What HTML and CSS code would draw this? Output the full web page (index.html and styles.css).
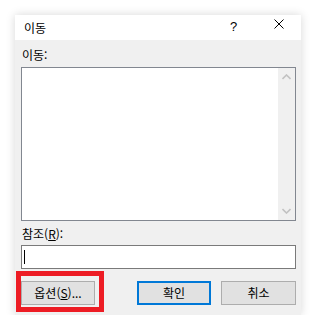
FILE: index.html
```html
<!DOCTYPE html>
<html lang="ko">
<head>
<meta charset="utf-8">
<link rel="stylesheet" href="styles.css">
</head>
<body>
<div class="dialog">
  <div class="titlebar">
    <span class="title">이동</span>
    <span class="help">?</span>
    <span class="close"><svg width="10" height="10" viewBox="0 0 10 10"><path d="M0.5 0.5L9.5 9.5M9.5 0.5L0.5 9.5" stroke="#000" stroke-width="1" fill="none"/></svg></span>
  </div>
  <div class="body">
    <div class="label">이동:</div>
    <div class="list">
      <div class="list-area"></div>
      <div class="scrollbar">
        <svg width="9" height="6" viewBox="0 0 9 6"><path d="M0.5 5L4.5 1L8.5 5" stroke="#c2c2c2" stroke-width="1.6" fill="none"/></svg>
        <svg width="9" height="6" viewBox="0 0 9 6"><path d="M0.5 1L4.5 5L8.5 1" stroke="#c2c2c2" stroke-width="1.6" fill="none"/></svg>
      </div>
    </div>
    <div class="label label2">참조(<u>R</u>):</div>
    <div class="input"><span class="caret"></span></div>
    <div class="buttons">
      <div class="btn options">옵션(<u>S</u>)...</div>
      <div class="spacer"></div>
      <div class="btn ok">확인</div>
      <div class="btn cancel">취소</div>
    </div>
  </div>
  <div class="highlight"></div>
</div>
</body>
</html>
```
FILE: styles.css
```css
html, body {
  margin: 0;
  padding: 0;
  background: #ffffff;
}
body {
  font-family: "Noto Sans CJK KR", "Noto Sans", sans-serif;
  font-size: 12px;
  color: #000;
}
.dialog {
  position: relative;
  margin: 15px 0 0 15px;
  width: 286px;
  height: 300px;
  background: #f0f0f0;
  box-shadow: 0 0 9px rgba(0, 0, 0, 0.16);
  display: flex;
  flex-direction: column;
}
.titlebar {
  height: 25px;
  background: #ffffff;
  display: flex;
  align-items: center;
  position: relative;
}
.title {
  margin-left: 9px;
  font-size: 12px;
  line-height: 16px;
  margin-top: 0px;
}
.help {
  position: absolute;
  left: 215px;
  top: 4px;
  font-family: "Liberation Sans", sans-serif;
  font-size: 13px;
  line-height: 16px;
}
.close {
  position: absolute;
  left: 259px;
  top: 4px;
  width: 10px;
  height: 10px;
  display: flex;
}
.body {
  flex: 1;
  padding: 7px 5px 0 6px;
  display: flex;
  flex-direction: column;
}
.label {
  line-height: 16px;
  height: 16px;
  margin-left: 1px;
}
.label u, .btn u {
  text-decoration-thickness: 1px;
  text-underline-offset: 1px;
}
.list {
  margin-top: 4px;
  height: 154px;
  box-sizing: border-box;
  border: 1px solid #828790;
  display: flex;
  background: #ffffff;
}
.list-area {
  flex: 1;
}
.scrollbar {
  width: 17px;
  background: #f0f0f0;
  display: flex;
  flex-direction: column;
  justify-content: space-between;
  align-items: center;
  padding: 6px 0 6px;
}
.label2 {
  margin-top: 5px;
}
.input {
  margin-top: 3px;
  height: 24px;
  box-sizing: border-box;
  border: 1px solid #7a7a7a;
  background: #ffffff;
  display: flex;
  align-items: center;
  padding-left: 2px;
}
.caret {
  width: 1px;
  height: 14px;
  background: #000;
}
.buttons {
  margin-top: 12px;
  display: flex;
}
.btn {
  height: 24px;
  box-sizing: border-box;
  border: 1px solid #adadad;
  background: #e1e1e1;
  display: flex;
  align-items: center;
  justify-content: center;
  width: 74px;
  line-height: 16px;
}
.spacer {
  flex: 1;
}
.ok {
  width: 74px;
  border: 2px solid #0078d7;
  margin-right: 10px;
}
.cancel {
  width: 75px;
}
.highlight {
  position: absolute;
  left: 1px;
  top: 256px;
  width: 88px;
  height: 41px;
  box-sizing: border-box;
  border: 5px solid #ed1c24;
}
```
